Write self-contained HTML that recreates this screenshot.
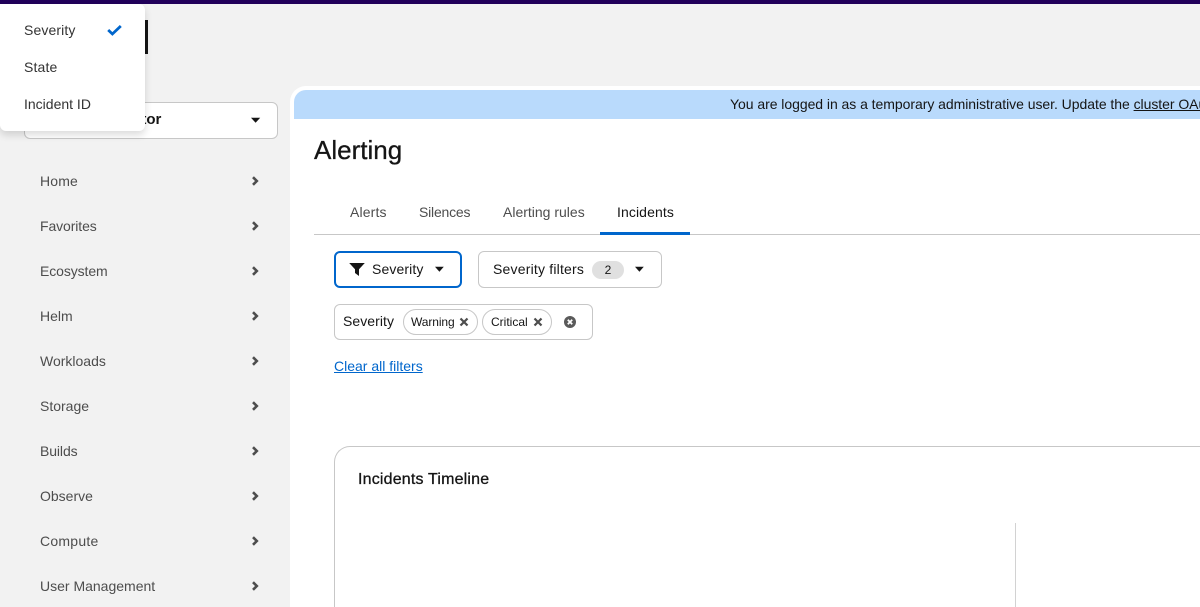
<!DOCTYPE html>
<html lang="en">
<head>
<meta charset="utf-8">
<title>Alerting</title>
<style>
html,body{margin:0;padding:0;width:1200px;height:607px;overflow:hidden}
body{background:#f2f2f2;font-family:"Liberation Sans",sans-serif;font-size:14px;color:#151515}
#root{position:absolute;left:0;top:0;width:1200px;height:607px;overflow:hidden;contain:paint}
.a{position:absolute;white-space:nowrap;line-height:20px}
.box{position:absolute;box-sizing:border-box;background:#fff}
svg{position:absolute;display:block}
.nav{color:#4d4d4d;left:40px}
</style>
</head>
<body>
<div id="root">
<div class="box" style="left:0;top:0;width:1200px;height:4px;background:#21005a"></div>

<div class="box" style="left:120px;top:20px;width:28px;height:34px;background:#151515"></div>

<!-- project selector -->
<div class="box" style="left:24px;top:102px;width:254px;height:37px;border:1px solid #c7c7c7;border-radius:6px"></div>
<div class="a" style="left:133px;top:110px;font-size:15px;font-weight:bold;color:#151515">ator</div>
<svg style="left:250px;top:117px" width="12" height="7" viewBox="0 0 12 7"><path d="M1 .8h9.200L5.600 5.800z" fill="#151515"/></svg>

<!-- nav -->
<div class="a nav" style="top:171px;letter-spacing:.15px">Home</div>
<div class="a nav" style="top:216px;letter-spacing:-.1px">Favorites</div>
<div class="a nav" style="top:261px;letter-spacing:-.1px">Ecosystem</div>
<div class="a nav" style="top:306px">Helm</div>
<div class="a nav" style="top:351px">Workloads</div>
<div class="a nav" style="top:396px">Storage</div>
<div class="a nav" style="top:441px;letter-spacing:-.1px">Builds</div>
<div class="a nav" style="top:486px">Observe</div>
<div class="a nav" style="top:531px;letter-spacing:.25px">Compute</div>
<div class="a nav" style="top:576px">User Management</div>
<svg style="left:250px;top:175px" width="10" height="420" viewBox="0 0 10 420" fill="none" stroke="#4d4d4d" stroke-width="2.600">
<path d="M3 2.200l3.800 3.800L3 9.800"/><path d="M3 47.200l3.800 3.800L3 54.800"/><path d="M3 92.200l3.800 3.800L3 99.800"/><path d="M3 137.200l3.800 3.800L3 144.800"/><path d="M3 182.200l3.800 3.800L3 189.800"/><path d="M3 227.200l3.800 3.800L3 234.800"/><path d="M3 272.200l3.800 3.800L3 279.800"/><path d="M3 317.200l3.800 3.800L3 324.800"/><path d="M3 362.200l3.800 3.800L3 369.800"/><path d="M3 407.200l3.800 3.800L3 414.800"/>
</svg>

<!-- main panel -->
<div class="box" style="left:290px;top:86px;width:910px;height:521px;border-radius:16px 0 0 0"></div>
<div class="box" style="left:294px;top:90px;width:906px;height:29px;background:#b9dafc;border-radius:12px 0 0 0"></div>
<div class="a" style="left:730px;top:94px;width:470px;overflow:hidden;color:#151515;letter-spacing:-.045px">You are logged in as a temporary administrative user. Update the <span style="text-decoration:underline">cluster OAuth configuration</span></div>

<div class="a" style="left:314px;top:135px;font-size:26px;line-height:30px;color:#151515;-webkit-text-stroke:.3px #151515">Alerting</div>

<!-- tabs -->
<div class="box" style="left:314px;top:234px;width:886px;height:1px;background:#c7c7c7"></div>
<div class="box" style="left:600px;top:232px;width:90px;height:3px;background:#0066cc"></div>
<div class="a" style="left:350px;top:202px;color:#4d4d4d;letter-spacing:.15px">Alerts</div>
<div class="a" style="left:419px;top:202px;color:#4d4d4d;letter-spacing:-.2px">Silences</div>
<div class="a" style="left:503px;top:202px;color:#4d4d4d">Alerting rules</div>
<div class="a" style="left:617px;top:202px;color:#151515;letter-spacing:.1px">Incidents</div>

<!-- toolbar -->
<div class="box" style="left:334px;top:251px;width:128px;height:37px;border:2px solid #0066cc;border-radius:6px"></div>
<svg style="left:349px;top:262px" width="16" height="14" viewBox="0 0 16 14"><path d="M.2 1h15.600L10 7.200V14L6 11V7.200z" fill="#151515"/></svg>
<div class="a" style="left:372px;top:259px;color:#151515;letter-spacing:.12px">Severity</div>
<svg style="left:434px;top:266px" width="11" height="7" viewBox="0 0 11 7"><path d="M1 .8h8.800L5.400 5.800z" fill="#151515"/></svg>

<div class="box" style="left:478px;top:251px;width:184px;height:37px;border:1px solid #c7c7c7;border-radius:6px"></div>
<div class="a" style="left:493px;top:259px;color:#151515;letter-spacing:.2px">Severity filters</div>
<div class="box" style="left:592px;top:261px;width:32px;height:18px;background:#e0e0e0;border-radius:9px"></div>
<div class="a" style="left:592px;top:260px;width:32px;text-align:center;font-size:12px;color:#151515">2</div>
<svg style="left:634px;top:266px" width="11" height="7" viewBox="0 0 11 7"><path d="M1 .8h8.800L5.400 5.800z" fill="#151515"/></svg>

<!-- filter group -->
<div class="box" style="left:334px;top:304px;width:259px;height:36px;border:1px solid #c7c7c7;border-radius:6px"></div>
<div class="a" style="left:343px;top:311px;color:#151515;letter-spacing:.06px">Severity</div>
<div class="box" style="left:403px;top:309px;width:75px;height:26px;border:1px solid #c7c7c7;border-radius:13px"></div>
<div class="a" style="left:411px;top:312px;font-size:12px;color:#151515;letter-spacing:-.1px">Warning</div>
<svg style="left:459px;top:317px" width="10" height="10" viewBox="0 0 10 10" fill="none" stroke="#4d4d4d" stroke-width="2.200"><path d="M1.500 1.500l7 7M8.500 1.500l-7 7"/></svg>
<div class="box" style="left:482px;top:309px;width:70px;height:26px;border:1px solid #c7c7c7;border-radius:13px"></div>
<div class="a" style="left:491px;top:312px;font-size:12px;color:#151515">Critical</div>
<svg style="left:533px;top:317px" width="10" height="10" viewBox="0 0 10 10" fill="none" stroke="#4d4d4d" stroke-width="2.200"><path d="M1.500 1.500l7 7M8.500 1.500l-7 7"/></svg>
<svg style="left:564px;top:316px" width="12" height="12" viewBox="0 0 12 12"><circle cx="6" cy="6" r="6" fill="#5a5a5a"/><path d="M3.800 3.800l4.400 4.400M8.200 3.800L3.800 8.200" stroke="#fff" stroke-width="1.800"/></svg>

<div class="a" style="left:334px;top:356px;color:#0066cc;text-decoration:underline">Clear all filters</div>

<!-- card -->
<div class="box" style="left:334px;top:446px;width:866px;height:161px;border:1px solid #c7c7c7;border-right:0;border-bottom:0;border-radius:16px 0 0 0"></div>
<div class="a" style="left:358px;top:470px;font-size:16px;color:#151515;-webkit-text-stroke:.3px #151515;letter-spacing:.18px">Incidents Timeline</div>
<div class="box" style="left:1015px;top:523px;width:1px;height:84px;background:#d2d2d2"></div>

<!-- dropdown menu -->
<div class="box" style="left:0;top:4px;width:145px;height:127px;border-radius:0 6px 6px 6px;box-shadow:0 4px 8px rgba(3,3,3,.14)"></div>
<div class="a" style="left:24px;top:20px;color:#333;letter-spacing:.12px">Severity</div>
<svg style="left:107px;top:24px" width="15" height="12" viewBox="0 0 15 12"><path d="M1.200 6l4.200 4L13.800 2" fill="none" stroke="#0066cc" stroke-width="2.800"/></svg>
<div class="a" style="left:24px;top:57px;color:#333;letter-spacing:.15px">State</div>
<div class="a" style="left:24px;top:94px;color:#333">Incident ID</div>
</div>
</body>
</html>
